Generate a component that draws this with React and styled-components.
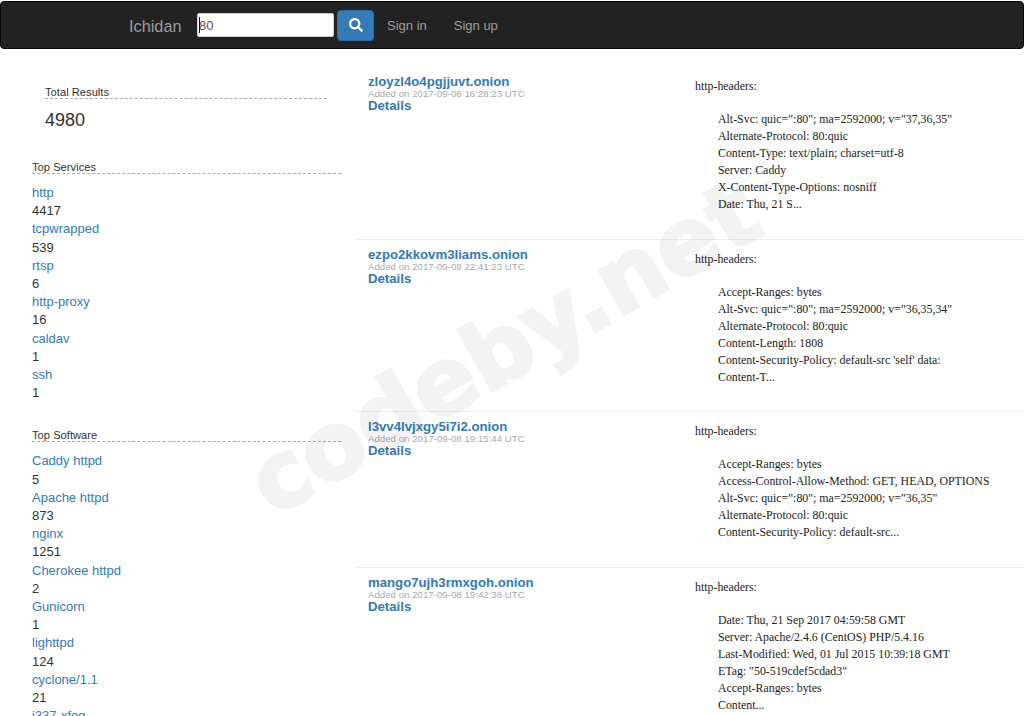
import React from "react";
import styled, { createGlobalStyle } from "styled-components";
import { FaSearch } from "react-icons/fa";

const topServices = [
  ["http", "4417"],
  ["tcpwrapped", "539"],
  ["rtsp", "6"],
  ["http-proxy", "16"],
  ["caldav", "1"],
  ["ssh", "1"],
];

const topSoftware = [
  ["Caddy httpd", "5"],
  ["Apache httpd", "873"],
  ["nginx", "1251"],
  ["Cherokee httpd", "2"],
  ["Gunicorn", "1"],
  ["lighttpd", "124"],
  ["cyclone/1.1", "21"],
  ["i337-xfog", "3"],
];

const results = [
  {
    host: "zloyzl4o4pgjjuvt.onion",
    added: "Added on 2017-09-08 16:28:23 UTC",
    height: 173,
    headers: [
      'Alt-Svc: quic=":80"; ma=2592000; v="37,36,35"',
      "Alternate-Protocol: 80:quic",
      "Content-Type: text/plain; charset=utf-8",
      "Server: Caddy",
      "X-Content-Type-Options: nosniff",
      "Date: Thu, 21 S...",
    ],
  },
  {
    host: "ezpo2kkovm3liams.onion",
    added: "Added on 2017-09-09 22:41:23 UTC",
    height: 172,
    headers: [
      "Accept-Ranges: bytes",
      'Alt-Svc: quic=":80"; ma=2592000; v="36,35,34"',
      "Alternate-Protocol: 80:quic",
      "Content-Length: 1808",
      "Content-Security-Policy: default-src 'self' data:",
      "Content-T...",
    ],
  },
  {
    host: "l3vv4lvjxgy5i7i2.onion",
    added: "Added on 2017-09-08 19:15:44 UTC",
    height: 156,
    headers: [
      "Accept-Ranges: bytes",
      "Access-Control-Allow-Method: GET, HEAD, OPTIONS",
      'Alt-Svc: quic=":80"; ma=2592000; v="36,35"',
      "Alternate-Protocol: 80:quic",
      "Content-Security-Policy: default-src...",
    ],
  },
  {
    host: "mango7ujh3rmxgoh.onion",
    added: "Added on 2017-09-08 19:42:38 UTC",
    height: 172,
    headers: [
      "Date: Thu, 21 Sep 2017 04:59:58 GMT",
      "Server: Apache/2.4.6 (CentOS) PHP/5.4.16",
      "Last-Modified: Wed, 01 Jul 2015 10:39:18 GMT",
      'ETag: "50-519cdef5cdad3"',
      "Accept-Ranges: bytes",
      "Content...",
    ],
  },
];

function App() {
  return (
    <Page>
      <GlobalStyle />
      <Navbar>
        <Brand>Ichidan</Brand>
        <SearchField>
          <SearchInput defaultValue="80" />
        </SearchField>
        <SearchButton aria-label="Search">
          <FaSearch size={14} />
        </SearchButton>
        <NavLink href="#">Sign in</NavLink>
        <NavLink href="#">Sign up</NavLink>
      </Navbar>
      <Main>
        <Sidebar>
          <TotalBlock>
            <SectionTitle>Total Results</SectionTitle>
            <TotalCount>4980</TotalCount>
          </TotalBlock>
          <Facet>
            <SectionTitle>Top Services</SectionTitle>
            <FacetList>
              {topServices.map(([name, count]) => (
                <li key={name}>
                  <FacetLink href="#">{name}</FacetLink>
                  <div>{count}</div>
                </li>
              ))}
            </FacetList>
          </Facet>
          <Facet>
            <SectionTitle>Top Software</SectionTitle>
            <FacetList>
              {topSoftware.map(([name, count]) => (
                <li key={name}>
                  <FacetLink href="#">{name}</FacetLink>
                  <div>{count}</div>
                </li>
              ))}
            </FacetList>
          </Facet>
        </Sidebar>
        <Results>
          {results.map((result) => (
            <ResultRow key={result.host} $height={result.height}>
              <ResultInfo>
                <ResultLink href="#">{result.host}</ResultLink>
                <AddedOn>{result.added}</AddedOn>
                <ResultLink href="#">Details</ResultLink>
              </ResultInfo>
              <Banner>
                <BannerTitle>http-headers:</BannerTitle>
                <HeaderList>
                  {result.headers.map((line) => (
                    <div key={line}>{line}</div>
                  ))}
                </HeaderList>
              </Banner>
            </ResultRow>
          ))}
        </Results>
      </Main>
      <Watermark>codeby.net</Watermark>
    </Page>
  );
}

const GlobalStyle = createGlobalStyle`
  html, body {
    margin: 0;
    height: 716px;
    overflow: hidden;
    background: #fff;
  }
  body {
    font-family: "Liberation Sans", Arial, sans-serif;
    font-size: 13px;
    color: #333;
  }
`;

const Page = styled.div`
  position: relative;
  height: 716px;
  overflow: hidden;
  padding-top: 1px;
  box-sizing: border-box;
`;

const Navbar = styled.nav`
  display: flex;
  align-items: center;
  height: 48px;
  box-sizing: border-box;
  padding: 0 0 0 128px;
  background: #222;
  border: 1px solid #080808;
  border-radius: 4px;
`;

const Brand = styled.span`
  width: 68px;
  padding-top: 2px;
  font-size: 16.3px;
  color: #9d9d9d;
`;

const SearchField = styled.div`
  position: relative;
  display: flex;
  &::before {
    content: "";
    position: absolute;
    left: 2px;
    top: 4px;
    width: 1px;
    height: 16px;
    background: #111;
  }
`;

const SearchInput = styled.input`
  width: 137px;
  height: 24px;
  box-sizing: border-box;
  padding: 0 1px;
  border: 1px solid #ccc;
  border-radius: 2px;
  background: #fff;
  color: #555;
  font: 13px "Liberation Sans", Arial, sans-serif;
  outline: none;
`;

const SearchButton = styled.button`
  display: flex;
  align-items: center;
  justify-content: center;
  width: 37px;
  height: 31px;
  margin-left: 3px;
  padding: 0;
  border: 1px solid #2e6da4;
  border-radius: 4px;
  background: #337ab7;
  color: #fff;
`;

const NavLink = styled.a`
  margin-left: 13px;
  margin-right: 14px;
  font-size: 13px;
  color: #9d9d9d;
  text-decoration: none;
  & + & {
    margin-left: 13px;
  }
`;

const Main = styled.div`
  display: flex;
  align-items: flex-start;
`;

const Sidebar = styled.aside`
  width: 354px;
  flex: none;
  box-sizing: border-box;
  padding: 35px 13px 0 32px;
`;

const TotalBlock = styled.section`
  margin: 0 14px 0 13px;
  height: 75px;
`;

const SectionTitle = styled.h4`
  margin: 0;
  height: 14px;
  font-size: 11.2px;
  font-weight: 400;
  line-height: 16px;
  color: #333;
  border-bottom: 1px dashed #aaa;
`;

const TotalCount = styled.div`
  margin-top: 11px;
  font-size: 18px;
  line-height: 20px;
  color: #333;
`;

const Facet = styled.section`
  margin-bottom: 25px;
`;

const FacetList = styled.ul`
  list-style: none;
  margin: 10px 0 0;
  padding: 0;
  font-size: 13px;
  line-height: 18.2px;
`;

const FacetLink = styled.a`
  display: block;
  color: #337ab7;
  text-decoration: none;
`;

const Results = styled.main`
  flex: 1;
  min-width: 0;
  padding-top: 18px;
`;

const ResultRow = styled.article`
  display: flex;
  height: ${(p) => p.$height}px;
  box-sizing: border-box;
  padding: 8px 0 0 14px;
  border-bottom: 1px solid #eee;
`;

const ResultInfo = styled.div`
  width: 327px;
  flex: none;
  display: flex;
  flex-direction: column;
  align-items: flex-start;
`;

const ResultLink = styled.a`
  font-size: 13.2px;
  font-weight: 700;
  line-height: 13px;
  color: #337ab7;
  text-decoration: none;
`;

const AddedOn = styled.span`
  margin-top: 1px;
  font-size: 9.7px;
  line-height: 10px;
  color: #aaa;
`;

const Banner = styled.div`
  padding-top: 3px;
  font-family: "Liberation Serif", "Times New Roman", serif;
  font-size: 11.87px;
  line-height: 17px;
  color: #222;
`;

const BannerTitle = styled.div`
  margin-bottom: 16px;
`;

const HeaderList = styled.div`
  padding-left: 23px;
`;

const Watermark = styled.div`
  position: absolute;
  left: 219px;
  top: 298px;
  font-family: "DejaVu Sans", Verdana, sans-serif;
  font-size: 92px;
  font-weight: 700;
  line-height: 100px;
  color: #000;
  opacity: 0.045;
  white-space: nowrap;
  -webkit-text-stroke: 3px #000;
  transform: rotate(-30deg);
  transform-origin: center;
  pointer-events: none;
`;

export default App;
